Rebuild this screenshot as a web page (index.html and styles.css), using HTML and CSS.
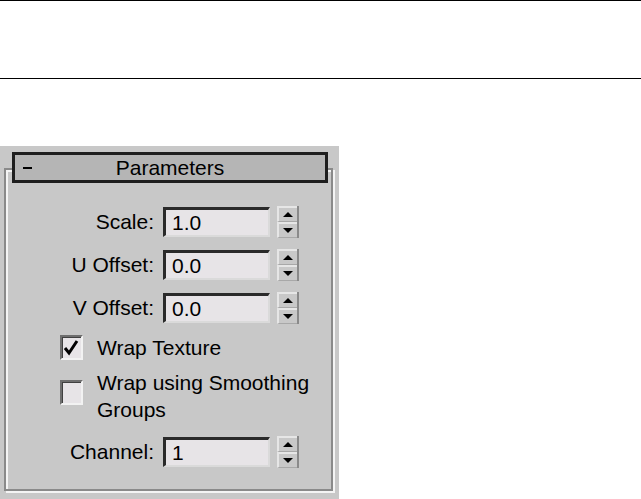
FILE: index.html
```html
<!DOCTYPE html>
<html>
<head>
<meta charset="utf-8">
<link rel="stylesheet" href="styles.css">
</head>
<body>
<div class="rules"></div>
<div class="panel">
  <div class="rollout-head">
    <span class="minus"></span>
    <span class="title">Parameters</span>
    <span></span>
  </div>
  <div class="group">
    <div class="row">
      <span class="lbl">Scale:</span>
      <span class="field">1.0</span>
      <span class="spin"><span class="sb"><i class="up"></i></span><span class="sb"><i class="down"></i></span></span>
    </div>
    <div class="row">
      <span class="lbl">U Offset:</span>
      <span class="field">0.0</span>
      <span class="spin"><span class="sb"><i class="up"></i></span><span class="sb"><i class="down"></i></span></span>
    </div>
    <div class="row">
      <span class="lbl">V Offset:</span>
      <span class="field">0.0</span>
      <span class="spin"><span class="sb"><i class="up"></i></span><span class="sb"><i class="down"></i></span></span>
    </div>
    <div class="check-row first">
      <span class="box"><svg width="19" height="21" viewBox="0 0 19 21"><polyline points="3,11 7,16 15,4" fill="none" stroke="#000" stroke-width="3"/></svg></span>
      <span class="ctext">Wrap Texture</span>
    </div>
    <div class="check-row second">
      <span class="box"></span>
      <span class="ctext">Wrap using Smoothing<br>Groups</span>
    </div>
    <div class="row channel">
      <span class="lbl">Channel:</span>
      <span class="field">1</span>
      <span class="spin"><span class="sb"><i class="up"></i></span><span class="sb"><i class="down"></i></span></span>
    </div>
  </div>
</div>
</body>
</html>
```

FILE: styles.css
```css
html, body {
  margin: 0;
  background: #fff;
}
body {
  font-family: "Liberation Sans", Arial, sans-serif;
  font-size: 21px;
  color: #000;
}
.rules {
  height: 77px;
  border-top: 1px solid #000;
  border-bottom: 1px solid #000;
}
.panel {
  margin-top: 67px;
  width: 339px;
  height: 353px;
  box-sizing: border-box;
  padding-top: 6px;
  background: #c8c8c8;
}
.rollout-head {
  position: relative;
  z-index: 1;
  margin-left: 12px;
  width: 316px;
  height: 31px;
  box-sizing: border-box;
  border: 3px solid #1e1e1e;
  background: #b5b5b5;
  display: grid;
  grid-template-columns: 1fr auto 1fr;
  align-items: center;
}
.minus {
  justify-self: start;
  margin-left: 8px;
  width: 9px;
  height: 2px;
  background: #000;
}
.title {
  line-height: 25px;
}
.group {
  margin-top: -15px;
  margin-left: 4px;
  width: 329px;
  box-sizing: border-box;
  border: 2px solid #8a8a8a;
  box-shadow: inset 2px 2px 0 #f4f4f4, 2px 2px 0 #f4f4f4;
  padding-top: 35px;
  padding-bottom: 21px;
}
.row {
  display: flex;
  align-items: center;
  height: 33px;
  margin-bottom: 10px;
}
.lbl {
  width: 148px;
  text-align: right;
  line-height: 27px;
}
.field {
  margin-left: 9px;
  width: 107px;
  height: 30px;
  box-sizing: border-box;
  border-top: 3px solid #2a2a2a;
  border-left: 3px solid #2a2a2a;
  border-right: 2px solid #dadada;
  border-bottom: 2px solid #dadada;
  background: #e7e4e7;
  padding-left: 6px;
  line-height: 25px;
}
.spin {
  margin-left: 7px;
  width: 22px;
  height: 32px;
  display: flex;
  flex-direction: column;
  box-sizing: border-box;
  border-right: 2px solid #8a8a8a;
}
.sb {
  flex: 1;
  display: flex;
  align-items: center;
  justify-content: center;
  border-top: 2px solid #e6e6e6;
  border-left: 2px solid #e6e6e6;
  border-bottom: 1px solid #a8a8a8;
  background: #c8c8c8;
}
.up {
  width: 0;
  height: 0;
  border-left: 5px solid transparent;
  border-right: 5px solid transparent;
  border-bottom: 5px solid #000;
}
.down {
  width: 0;
  height: 0;
  border-left: 5px solid transparent;
  border-right: 5px solid transparent;
  border-top: 5px solid #000;
}
.check-row {
  display: flex;
  margin-left: 54px;
}
.check-row.first {
  align-items: center;
  margin-top: 1px;
}
.check-row.second {
  align-items: flex-start;
  margin-top: 8px;
}
.check-row.second .box {
  margin-top: 11px;
}
.box {
  width: 23px;
  height: 25px;
  box-sizing: border-box;
  border-top: 2px solid #6e6e6e;
  border-left: 2px solid #6e6e6e;
  border-right: 2px solid #f2f2f2;
  border-bottom: 2px solid #f2f2f2;
  box-shadow: inset 1px 1px 0 #404040;
  background: #e7e4e7;
  display: flex;
  align-items: center;
  justify-content: center;
}
.box svg {
  display: block;
}
.ctext {
  margin-left: 14px;
  line-height: 27px;
}
.row.channel {
  margin-top: 12px;
  margin-bottom: 0;
}
```
